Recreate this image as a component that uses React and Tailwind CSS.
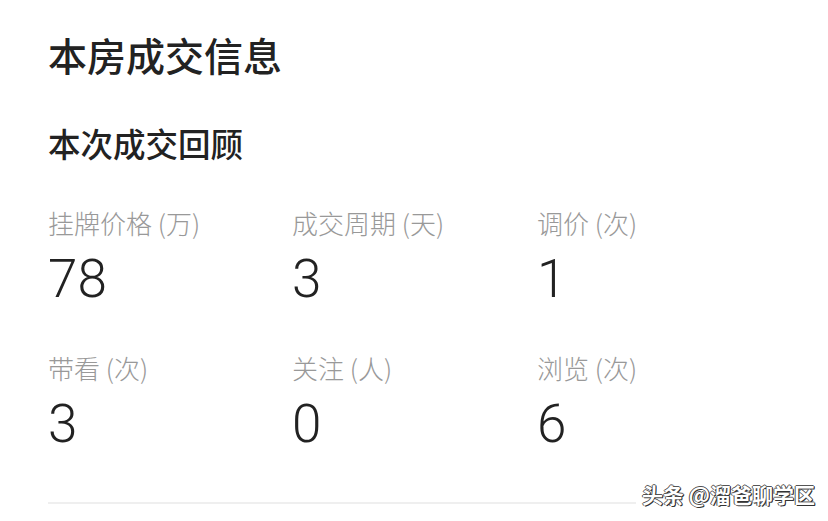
import React from "react";

const stats = [
  { label: "挂牌价格", unit: "万", value: "78" },
  { label: "成交周期", unit: "天", value: "3" },
  { label: "调价", unit: "次", value: "1" },
  { label: "带看", unit: "次", value: "3" },
  { label: "关注", unit: "人", value: "0" },
  { label: "浏览", unit: "次", value: "6" },
];

const cjk = { fontFamily: '"Noto Sans CJK SC", "Noto Sans", sans-serif' };

const App = () => {
  return (
    <div className="relative w-[828px] h-[521px] bg-white overflow-hidden" style={cjk}>
      <div className="pl-[48px] pr-[48px] pt-[32px]">
        <h1 className="text-[39px] leading-[44px] font-medium text-[#222]">本房成交信息</h1>
        <h2 className="mt-[47px] text-[32.5px] leading-[40px] font-medium text-[#222]">本次成交回顾</h2>

        <div className="mt-[44px] grid grid-cols-[244px_245px_1fr] gap-y-[45px]">
          {stats.map((s) => (
            <div key={s.label} className="flex flex-col">
              <div className="text-[26px] leading-[32px] font-light text-[#999] whitespace-nowrap">
                {s.label} ({s.unit})
              </div>
              <div
                className="mt-[12px] text-[53px] leading-[56px] font-light text-[#222]"
                style={{ fontFamily: "Roboto, 'Noto Sans', sans-serif" }}
              >
                {s.value}
              </div>
            </div>
          ))}
        </div>

        <div className="mt-[50px] h-[2px] bg-[#efefef]" />
      </div>

      <div
        className="absolute right-[13px] bottom-[14px] pl-[6px] bg-white text-[21px] leading-[26px] text-white font-bold"
        style={{ textShadow: "1px 1px 0 #333, -1px 0 0 #555, 0 -1px 0 #555, 1px 0 0 #333" }}
      >
        头条 @溜爸聊学区
      </div>
    </div>
  );
};

export default App;
